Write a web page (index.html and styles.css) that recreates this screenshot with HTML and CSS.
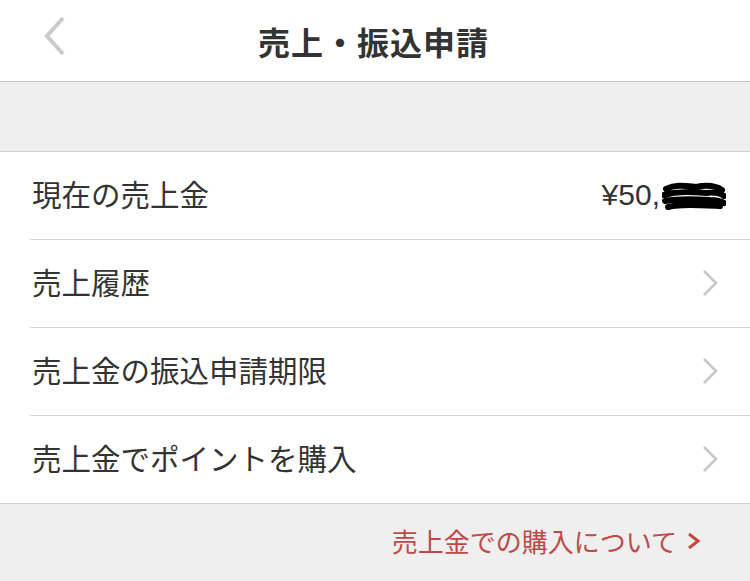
FILE: index.html
```html
<!DOCTYPE html>
<html lang="ja">
<head>
<meta charset="utf-8">
<link rel="stylesheet" href="styles.css">
</head>
<body>
<div class="page">
  <header class="nav">
    <svg class="back" width="24" height="40" viewBox="0 0 24 40"><path d="M20 2 L4 20 L20 38" fill="none" stroke="#cbcbcb" stroke-width="4"/></svg>
    <h1 class="title">売上・振込申請</h1>
  </header>
  <div class="band"></div>
  <ul class="list">
    <li class="row">
      <span class="label">現在の売上金</span>
      <span class="amount">¥50,<svg class="redact" width="64" height="30" viewBox="0 0 64 30"><path d="M4 8 C14 3 24 5 34 6 C44 4 54 5 60 9 M2 14 C16 10 30 11 44 12 C52 11 58 12 62 15 M3 20 C18 17 34 18 48 19 C54 19 59 20 62 22 M6 26 C20 23 36 24 58 25" fill="none" stroke="#000" stroke-width="6" stroke-linecap="round"/></svg></span>
    </li>
    <li class="row">
      <span class="label">売上履歴</span>
      <svg class="chev" width="18" height="28" viewBox="0 0 18 28"><path d="M3 2 L15 14 L3 26" fill="none" stroke="#c8c8c8" stroke-width="2.6"/></svg>
    </li>
    <li class="row">
      <span class="label">売上金の振込申請期限</span>
      <svg class="chev" width="18" height="28" viewBox="0 0 18 28"><path d="M3 2 L15 14 L3 26" fill="none" stroke="#c8c8c8" stroke-width="2.6"/></svg>
    </li>
    <li class="row last">
      <span class="label">売上金でポイントを購入</span>
      <svg class="chev" width="18" height="28" viewBox="0 0 18 28"><path d="M3 2 L15 14 L3 26" fill="none" stroke="#c8c8c8" stroke-width="2.6"/></svg>
    </li>
  </ul>
  <footer class="foot">
    <a class="link">売上金での購入について<svg class="link-chev" width="14" height="18" viewBox="0 0 14 18"><path d="M2 2 L11 9 L2 16" fill="none" stroke="#c9453f" stroke-width="3"/></svg></a>
  </footer>
</div>
</body>
</html>
```
FILE: styles.css
```css
* { box-sizing: border-box; }
html, body { margin: 0; padding: 0; }
body {
  width: 750px;
  height: 581px;
  overflow: hidden;
  background: #efefef;
  font-family: "Noto Sans CJK JP", "Liberation Sans", sans-serif;
  color: #333;
}
.page { display: flex; flex-direction: column; }
.nav {
  height: 82px;
  background: #fff;
  border-bottom: 1px solid #c8c8c8;
  display: flex;
  align-items: center;
  justify-content: center;
  position: relative;
}
.back { position: absolute; left: 43px; top: 16px; }
.title {
  margin: 0 0 0 -3px;
  font-size: 32px;
  font-weight: 700;
  color: #333;
  letter-spacing: 1px;
  line-height: 1;
}
.band {
  height: 70px;
  background: #efefef;
  border-bottom: 1px solid #d0d0d0;
}
.list {
  list-style: none;
  margin: 0;
  padding: 0 0 0 30px;
  background: #fff;
  border-bottom: 1px solid #cfcfcf;
}
.row {
  height: 88px;
  display: flex;
  align-items: center;
  justify-content: space-between;
  padding: 0 31px 0 2px;
  border-bottom: 1px solid #d4d4d4;
}
.row.last { border-bottom: none; height: 87px; }
.label {
  font-size: 29.5px;
  color: #333;
  line-height: 1;
  margin-top: -3px;
}
.amount {
  display: flex;
  align-items: center;
  font-family: "Liberation Sans", sans-serif;
  font-size: 30px;
  color: #333;
  margin-right: -7px;
  margin-top: -2px;
}
.redact { margin-left: 2px; margin-top: 2px; }
.chev { margin-top: -2px; }
.foot {
  height: 78px;
  background: #efefef;
  display: flex;
  justify-content: flex-end;
  align-items: center;
  padding-right: 49px;
}
.link {
  display: flex;
  align-items: center;
  font-size: 26px;
  color: #bd4a47;
  line-height: 1;
  margin-top: -4px;
}
.link-chev { margin-left: 10px; }
```
